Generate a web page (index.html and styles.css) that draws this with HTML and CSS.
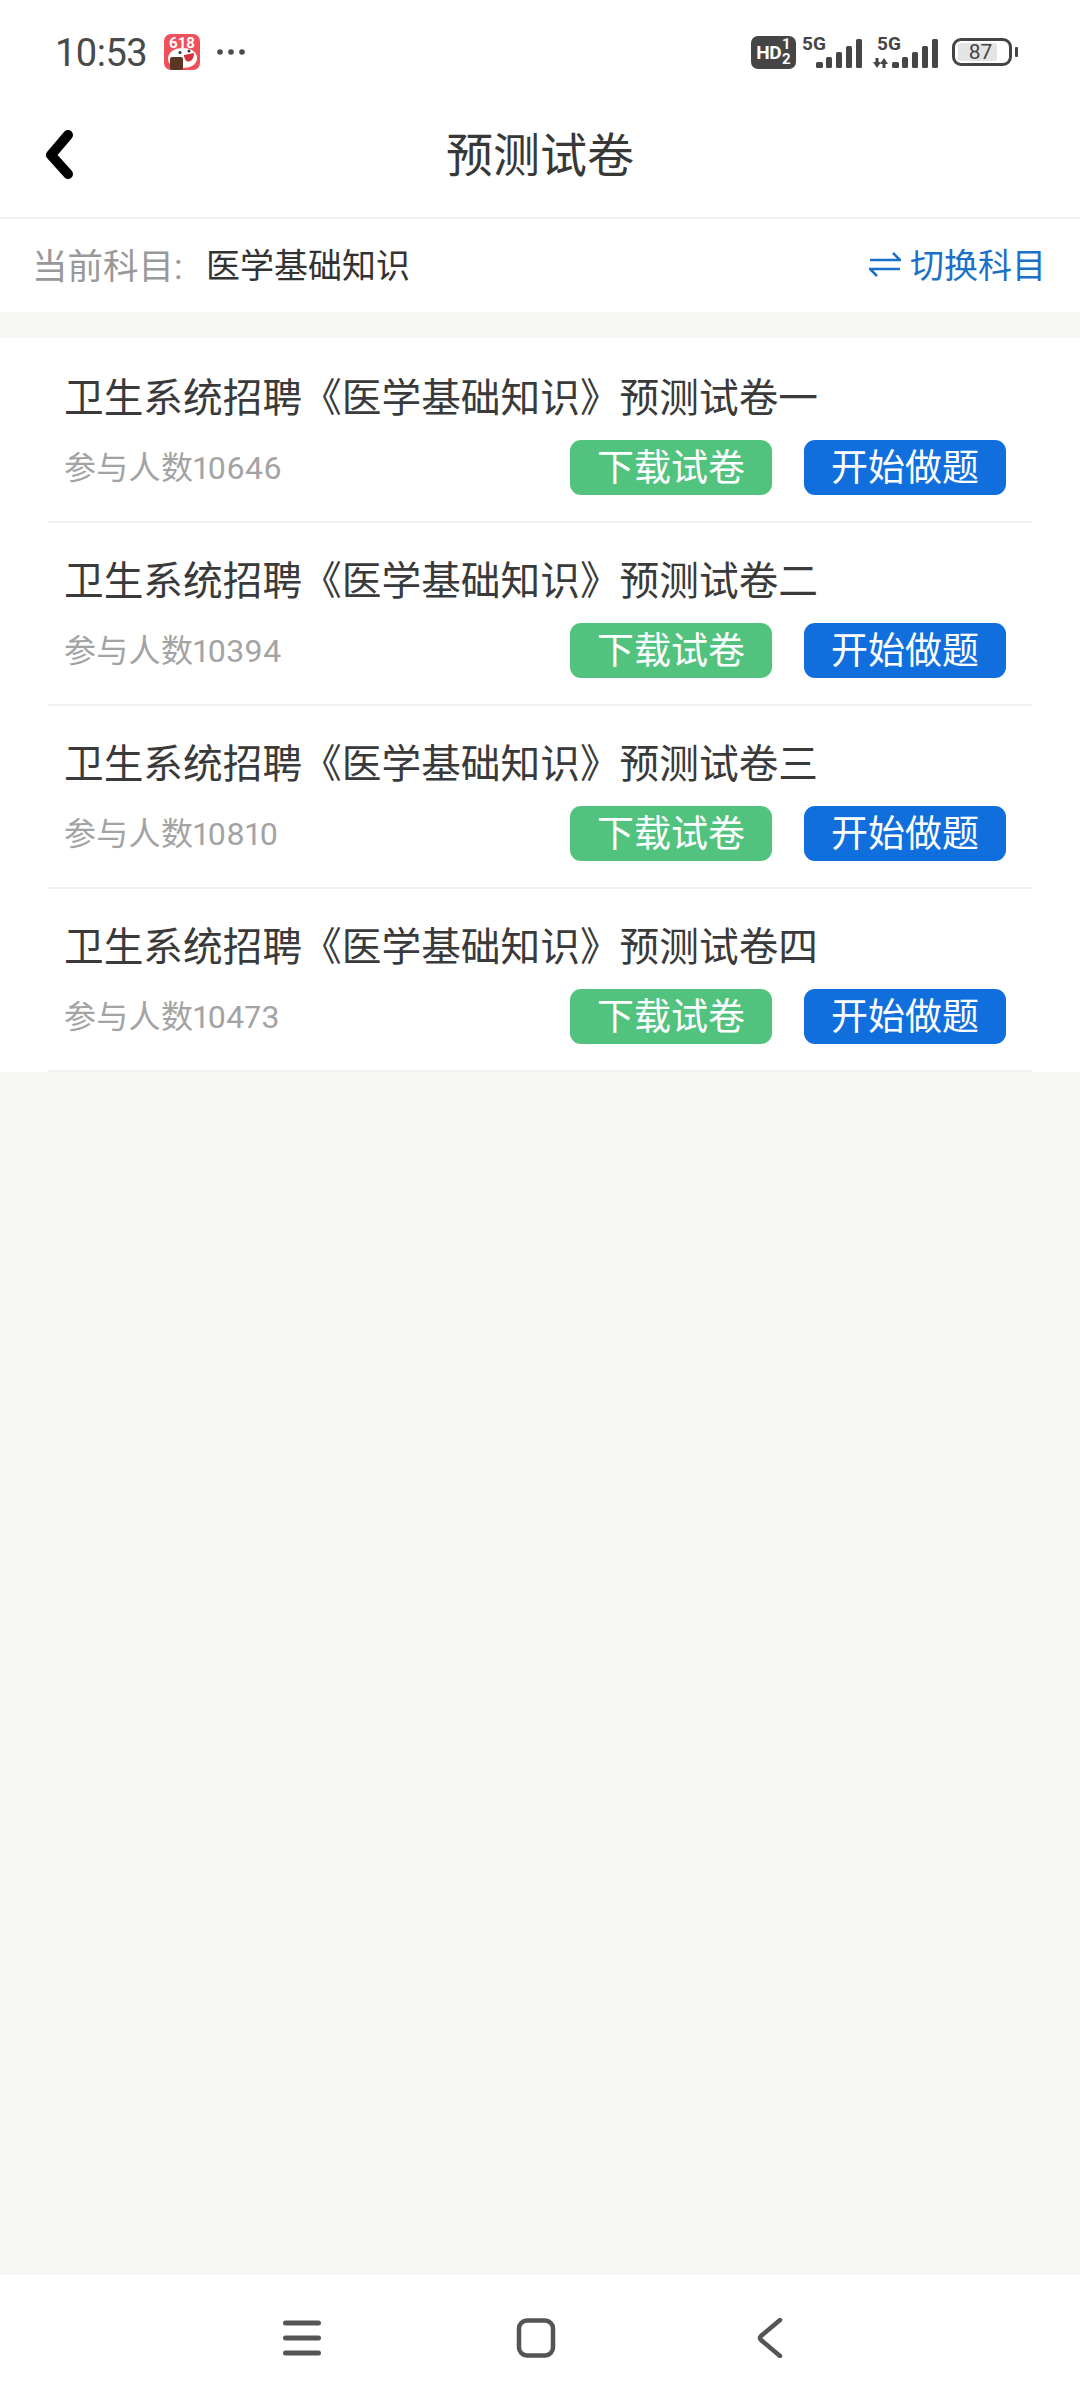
FILE: index.html
```html
<!DOCTYPE html>
<html lang="zh-CN">
<head>
<meta charset="UTF-8">
<title>预测试卷</title>
<meta name="viewport" content="width=device-width, initial-scale=1.0">
<link rel="stylesheet" href="styles.css">
</head>
<body>

<div class="status-bar">
    <div class="status-left">
        <span class="time">10:53</span>
        <svg class="app-icon" width="36" height="36" viewBox="0 0 36 36">
            <rect width="36" height="36" rx="7" fill="#f0505c"/>
            <path d="M4 25 C4 17 12 14 19 14 C27 14 33 18 33 24 C33 31 26 34 18 34 C11 34 4 31 4 25Z" fill="#fff"/>
            <path d="M20 21 L30 19 C30 25 27 27.500 24 27.500 C22 27.500 20 24 20 21Z" fill="#d8303c"/>
            <circle cx="16" cy="18.500" r="1.500" fill="#333"/>
            <circle cx="25" cy="17" r="1.500" fill="#333"/>
            <rect x="6" y="23" width="13" height="13" rx="2" fill="#5c3524"/>
            <text x="18" y="14" class="app-icon-text">618</text>
        </svg>
        <svg class="dots" width="30" height="8" viewBox="0 0 30 8">
            <circle cx="4" cy="4" r="2.800"/>
            <circle cx="15" cy="4" r="2.800"/>
            <circle cx="26" cy="4" r="2.800"/>
        </svg>
    </div>
    <div class="status-right">
        <div class="hd-badge">
            <span class="hd-text">HD</span>
            <span class="hd-sim"><i>1</i><i>2</i></span>
        </div>
        <div class="signal">
            <span class="signal-label">5G</span>
            <svg width="60" height="34" viewBox="0 0 60 34">
                <rect x="14" y="27" width="7" height="6" rx="1.500"/>
                <rect x="24" y="22" width="6" height="11" rx="1.500"/>
                <rect x="34" y="17" width="6" height="16" rx="1.500"/>
                <rect x="44" y="11" width="6" height="22" rx="1.500"/>
                <rect x="54" y="4" width="6" height="29" rx="1.500"/>
            </svg>
        </div>
        <div class="signal signal-second">
            <span class="signal-label">5G</span>
            <svg width="65" height="34" viewBox="0 0 65 34">
                <path d="M2.500 23 h3 v4 h2.500 l-4 6 -4 -6 h2.500z"/>
                <path d="M9.500 33 h3 v-4 h2.500 l-4 -6 -4 6 h2.500z"/>
                <rect x="19" y="27" width="7" height="6" rx="1.500"/>
                <rect x="29" y="22" width="6" height="11" rx="1.500"/>
                <rect x="39" y="17" width="6" height="16" rx="1.500"/>
                <rect x="49" y="11" width="6" height="22" rx="1.500"/>
                <rect x="59" y="4" width="6" height="29" rx="1.500"/>
            </svg>
        </div>
        <div class="battery">
            <div class="battery-body">
                <span class="battery-level">87</span>
            </div>
            <div class="battery-tip"></div>
        </div>
    </div>
</div>

<header class="nav-header">
    <svg class="back-icon" width="30" height="50" viewBox="0 0 30 50">
        <path d="M23 5 L6 25 L23 44" fill="none" stroke="#000" stroke-width="10" stroke-linecap="round" stroke-linejoin="round"/>
    </svg>
    <h1>预测试卷</h1>
</header>

<div class="subject-bar">
    <div class="subject-current">
        <span class="subject-label">当前科目:</span>
        <span class="subject-name">医学基础知识</span>
    </div>
    <div class="subject-switch">
        <svg width="32" height="32" viewBox="0 0 32 32">
            <path d="M1 12 H31 L24 5 M31 21 H1 L8 28" fill="none" stroke="#1b70c8" stroke-width="2.500"/>
        </svg>
        <span>切换科目</span>
    </div>
</div>

<main class="page-body">
    <ul class="paper-list">
        <li class="paper-item">
            <div class="paper-title">卫生系统招聘《医学基础知识》预测试卷一</div>
            <div class="paper-meta">
                <span class="paper-count">参与人数10646</span>
                <div class="paper-actions">
                    <button class="btn btn-download">下载试卷</button>
                    <button class="btn btn-start">开始做题</button>
                </div>
            </div>
        </li>
        <li class="paper-item">
            <div class="paper-title">卫生系统招聘《医学基础知识》预测试卷二</div>
            <div class="paper-meta">
                <span class="paper-count">参与人数10394</span>
                <div class="paper-actions">
                    <button class="btn btn-download">下载试卷</button>
                    <button class="btn btn-start">开始做题</button>
                </div>
            </div>
        </li>
        <li class="paper-item">
            <div class="paper-title">卫生系统招聘《医学基础知识》预测试卷三</div>
            <div class="paper-meta">
                <span class="paper-count">参与人数10810</span>
                <div class="paper-actions">
                    <button class="btn btn-download">下载试卷</button>
                    <button class="btn btn-start">开始做题</button>
                </div>
            </div>
        </li>
        <li class="paper-item">
            <div class="paper-title">卫生系统招聘《医学基础知识》预测试卷四</div>
            <div class="paper-meta">
                <span class="paper-count">参与人数10473</span>
                <div class="paper-actions">
                    <button class="btn btn-download">下载试卷</button>
                    <button class="btn btn-start">开始做题</button>
                </div>
            </div>
        </li>
    </ul>
</main>

<nav class="system-nav">
    <svg width="40" height="40" viewBox="0 0 40 40">
        <path d="M3.500 5 H36.500 M3.500 20 H36.500 M3.500 35 H36.500" fill="none" stroke="#555" stroke-width="5" stroke-linecap="round"/>
    </svg>
    <svg width="40" height="40" viewBox="0 0 40 40">
        <rect x="3" y="2.500" width="34" height="35" rx="8" fill="none" stroke="#555" stroke-width="4.500"/>
    </svg>
    <svg width="40" height="40" viewBox="0 0 40 40">
        <path d="M30 2 L11 18 Q9 20 11 22 L30 38" fill="none" stroke="#555" stroke-width="4.500" stroke-linecap="round"/>
    </svg>
</nav>

</body>
</html>
```

FILE: styles.css
```css
* {
    box-sizing: border-box;
}
body {
    font-family: Roboto, "Noto Sans CJK SC", sans-serif;
    background: #f6f6f4;
    margin: 0;
    padding: 0;
    width: 1080px;
    height: 2401px;
    display: flex;
    flex-direction: column;
    overflow: hidden;
}

/* status bar */
.status-bar {
    height: 92px;
    padding: 12px 62px 0 55px;
    background: white;
    display: flex;
    justify-content: space-between;
    align-items: center;
    color: #454545;
}
.status-left {
    display: flex;
    align-items: center;
}
.time {
    width: 92px;
    padding-top: 2px;
    font-size: 38px;
    line-height: 44px;
    letter-spacing: -0.5px;
    white-space: nowrap;
    color: #4a4a4a;
}
.app-icon {
    margin-left: 17px;
}
.app-icon-text {
    font-family: Roboto, sans-serif;
    font-size: 15px;
    font-weight: 700;
    fill: white;
    text-anchor: middle;
}
.dots {
    margin-left: 16px;
    fill: #4a4a4a;
}
.status-right {
    display: flex;
    align-items: center;
}
.hd-badge {
    width: 45px;
    height: 33px;
    background: #454545;
    border-radius: 7px;
    color: white;
    display: flex;
    align-items: center;
    justify-content: center;
    font-weight: 700;
}
.hd-text {
    font-size: 19px;
    letter-spacing: -0.5px;
}
.hd-sim {
    display: flex;
    flex-direction: column;
    font-size: 15px;
    line-height: 15px;
    margin-left: 1px;
}
.hd-sim i {
    font-style: normal;
}
.signal {
    position: relative;
    margin-left: 6px;
}
.signal svg {
    display: block;
    fill: #454545;
}
.signal-label {
    position: absolute;
    left: 0;
    top: 0;
    font-size: 19px;
    line-height: 18px;
    font-weight: 700;
    color: #454545;
}
.signal-second {
    margin-left: 11px;
}
.signal-second .signal-label {
    left: 4px;
}
.battery {
    display: flex;
    align-items: center;
    margin-left: 14px;
}
.battery-body {
    width: 60px;
    height: 28px;
    border: 3px solid #454545;
    border-radius: 9px;
    padding: 2px 12px 2px 3px;
    display: flex;
}
.battery-level {
    flex: 1;
    padding-left: 6px;
    background: #e4e4e4;
    border-radius: 2px;
    color: #454545;
    font-size: 21px;
    line-height: 18px;
    text-align: center;
}
.battery-tip {
    width: 3px;
    height: 10px;
    margin-left: 3px;
    background: #454545;
    border-radius: 1px;
}

/* title bar */
.nav-header {
    position: relative;
    height: 127px;
    padding-bottom: 7px;
    background: white;
    border-bottom: 2px solid #f0f0f0;
    display: flex;
    align-items: center;
    justify-content: center;
}
.nav-header h1 {
    margin: 0;
    font-size: 47px;
    font-weight: 400;
    color: #383838;
}
.back-icon {
    position: absolute;
    left: 45px;
    top: 38px;
}

/* current subject */
.subject-bar {
    height: 93px;
    padding: 0 34px 4px 32px;
    background: white;
    display: flex;
    justify-content: space-between;
    align-items: center;
    font-size: 34px;
}
.subject-current {
    display: flex;
    align-items: center;
}
.subject-label {
    width: 174px;
    font-size: 35.5px;
    color: #999;
}
.subject-name {
    color: #333;
}
.subject-switch {
    display: flex;
    align-items: center;
    gap: 9px;
    color: #1b70c8;
}

.page-body {
    flex: 1;
    padding-top: 26px;
}

/* paper list */
.paper-list {
    list-style: none;
    margin: 0;
    padding: 2px 48px 0;
    background: white;
}
.paper-item {
    height: 183px;
    padding: 36px 26px 0 16px;
    border-bottom: 2px solid #f1f1f1;
}
.paper-title {
    font-size: 39.7px;
    line-height: 46px;
    color: #3a3a3a;
    white-space: nowrap;
}
.paper-meta {
    margin-top: 18px;
    display: flex;
    justify-content: space-between;
    align-items: center;
}
.paper-count {
    padding-bottom: 6px;
    font-size: 32px;
    letter-spacing: 0.3px;
    font-variant-numeric: proportional-nums;
    color: #a3a3a3;
}
.paper-actions {
    display: flex;
    gap: 32px;
}
.btn {
    width: 202px;
    height: 55px;
    padding: 3px 0 0;
    border: none;
    border-radius: 11px;
    color: white;
    font-family: inherit;
    font-size: 37px;
    line-height: 50px;
}
.btn-download {
    background: #52c27f;
}
.btn-start {
    background: #116edd;
}

/* system navigation */
.system-nav {
    height: 126px;
    background: white;
    display: flex;
    justify-content: space-between;
    align-items: center;
    padding: 0 290px 0 282px;
}
```
